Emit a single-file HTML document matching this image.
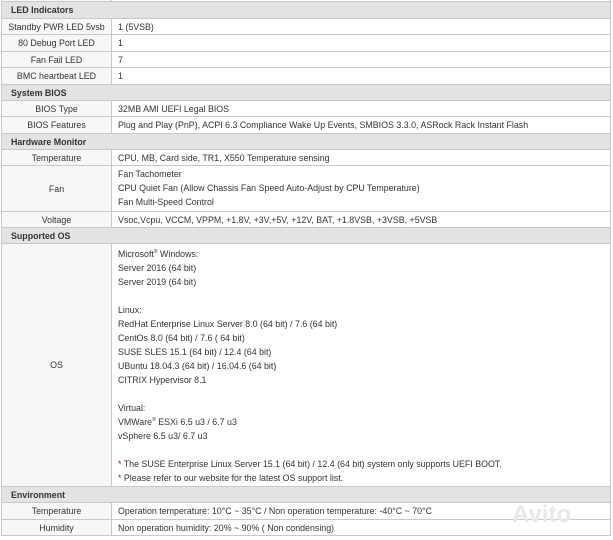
<!DOCTYPE html>
<html><head><meta charset="utf-8"><style>
*{margin:0;padding:0;box-sizing:border-box}
body{width:613px;height:540px;background:#fff;font-family:"Liberation Sans",Arial,sans-serif;font-size:8.85px;color:#333;overflow:hidden;position:relative}
.r{position:absolute;left:1px;width:610px;border-bottom:1px solid #c8c8c8;border-left:1px solid #c8c8c8;border-right:1px solid #c8c8c8}
.h{background:#e3e3e3;font-weight:bold;padding-left:9px;display:flex;align-items:center}
.l{position:absolute;left:0;top:0;bottom:0;width:110px;border-right:1px solid #c8c8c8;background:#f7f7f7;display:flex;align-items:center;justify-content:center;text-align:center}
.v{position:absolute;left:116px;top:0;bottom:0;display:flex;align-items:center;white-space:nowrap}
.m{position:absolute;left:116px;line-height:14px;white-space:nowrap}
.red{color:#d00}
sup{font-size:5px;line-height:0;vertical-align:4px}
</style></head><body>
<div class="r" style="top:-1px;height:3px"><div class="l"></div></div>
<div class="r h" style="top:2px;height:17px">LED Indicators</div>
<div class="r" style="top:19px;height:16px"><div class="l">Standby PWR LED 5vsb</div><div class="v">1 (5VSB)</div></div>
<div class="r" style="top:35px;height:17px"><div class="l">80 Debug Port LED</div><div class="v">1</div></div>
<div class="r" style="top:52px;height:16px"><div class="l">Fan Fail LED</div><div class="v">7</div></div>
<div class="r" style="top:68px;height:17px"><div class="l">BMC heartbeat LED</div><div class="v">1</div></div>
<div class="r h" style="top:85px;height:16px">System BIOS</div>
<div class="r" style="top:101px;height:16px"><div class="l">BIOS Type</div><div class="v">32MB AMI UEFI Legal BIOS</div></div>
<div class="r" style="top:117px;height:17px"><div class="l">BIOS Features</div><div class="v">Plug and Play (PnP), ACPI 6.3 Compliance Wake Up Events, SMBIOS 3.3.0, ASRock Rack Instant Flash</div></div>
<div class="r h" style="top:134px;height:16px">Hardware Monitor</div>
<div class="r" style="top:150px;height:16px"><div class="l">Temperature</div><div class="v">CPU, MB, Card side, TR1, X550 Temperature sensing</div></div>
<div class="r" style="top:166px;height:46px"><div class="l">Fan</div><div class="m" style="top:1px">Fan Tachometer<br>CPU Quiet Fan (Allow Chassis Fan Speed Auto-Adjust by CPU Temperature)<br>Fan Multi-Speed Control</div></div>
<div class="r" style="top:212px;height:16px"><div class="l">Voltage</div><div class="v">Vsoc,Vcpu, VCCM, VPPM, +1.8V, +3V,+5V, +12V, BAT, +1.8VSB, +3VSB, +5VSB</div></div>
<div class="r h" style="top:228px;height:16px">Supported OS</div>
<div class="r" style="top:244px;height:243px"><div class="l">OS</div><div class="m" style="top:3px">Microsoft<sup>®</sup> Windows:<br>Server 2016 (64 bit)<br>Server 2019 (64 bit)<br>&nbsp;<br>Linux:<br>RedHat Enterprise Linux Server 8.0 (64 bit) / 7.6 (64 bit)<br>CentOs 8.0 (64 bit) / 7.6 ( 64 bit)<br>SUSE SLES 15.1 (64 bit) / 12.4 (64 bit)<br>UBuntu 18.04.3 (64 bit) / 16.04.6 (64 bit)<br>CITRIX Hypervisor 8.1<br>&nbsp;<br>Virtual:<br>VMWare<sup>®</sup> ESXi 6.5 u3 / 6.7 u3<br>vSphere 6.5 u3/ 6.7 u3<br>&nbsp;<br><span class="red">*</span> The SUSE Enterprise Linux Server 15.1 (64 bit) / 12.4 (64 bit) system only supports UEFI BOOT.<br><span class="red">*</span> Please refer to our website for the latest OS support list.</div></div>
<div class="r h" style="top:487px;height:16px">Environment</div>
<div class="r" style="top:503px;height:17px"><div class="l">Temperature</div><div class="v">Operation temperature: 10°C ~ 35°C / Non operation temperature: -40°C ~ 70°C</div></div>
<div class="r" style="top:520px;height:16px"><div class="l">Humidity</div><div class="v">Non operation humidity: 20% ~ 90% ( Non condensing)</div></div>
<div style="position:absolute;left:512px;top:501px;font-size:24px;font-weight:bold;color:#e8e8e8">Avito</div>
</body></html>
